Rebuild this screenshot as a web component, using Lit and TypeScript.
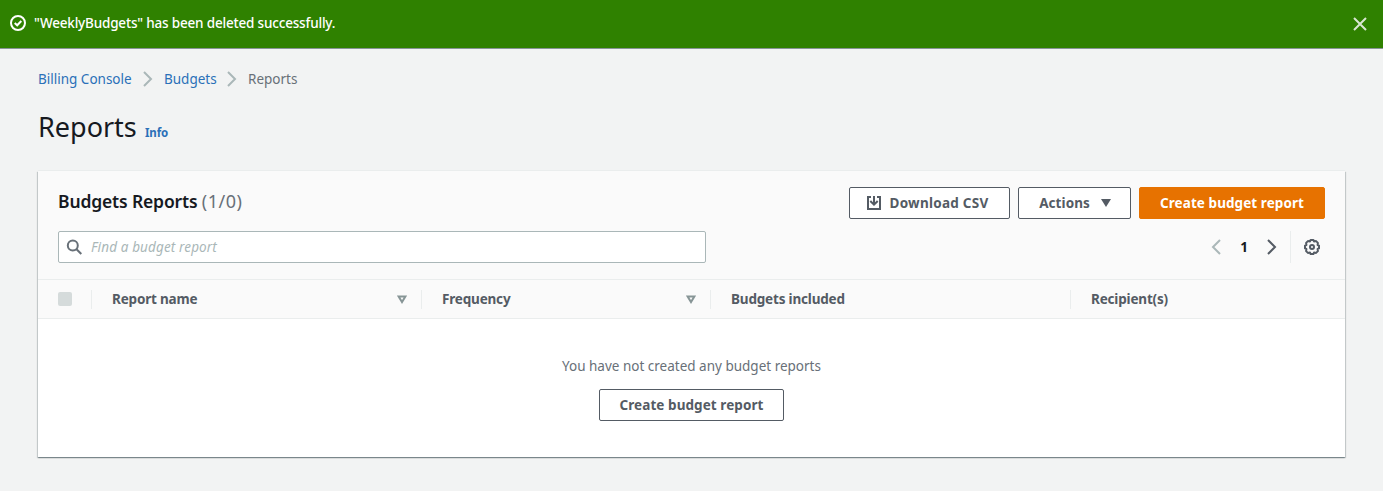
import { LitElement, html, css, svg } from "lit";
import { customElement } from "lit/decorators.js";

const chevronRight = svg`<path d="M4 1 L11 8 L4 15" />`;
const chevronLeft = svg`<path d="M12 1 L5 8 L12 15" />`;

@customElement("app-root")
class AppRoot extends LitElement {
  static styles = css`
    :host {
      display: block;
      height: 491px;
      overflow: hidden;
      background: #f2f3f3;
      color: #16191f;
      font-family: "Noto Sans", "Open Sans", sans-serif;
      font-size: 13.5px;
      line-height: 22px;
    }
    * { box-sizing: border-box; }
    svg { display: block; flex: none; fill: none; stroke: currentColor; stroke-width: 2; }
    span, h1, h2, a { white-space: nowrap; }
    .flash {
      display: flex;
      align-items: center;
      height: 49px;
      padding: 0 15px 3px 10px;
      background: #2f8100;
      border-bottom: 1px solid #879596;
      color: #fff;
    }
    .flash span { margin-left: 8px; flex: 1; font-weight: 500; letter-spacing: -0.18px; }
    .close { margin-top: 2px; color: #d9e6d2; }
    .crumbs { display: flex; align-items: center; height: 22px; margin: 19px 0 0 38px; color: #687078; }
    .crumbs a { color: #2a70b8; }
    .crumbs .c1 { width: 94px; }
    .crumbs .c2 { width: 52px; }
    .crumbs svg { color: #aab7b8; margin: 0 8px; }
    .title { display: flex; align-items: baseline; height: 40px; margin: 17px 0 0 38px; }
    h1 { width: 107px; margin: 0; font-size: 27px; font-weight: 400; line-height: 40px; }
    .info { font-size: 11.5px; font-weight: 700; letter-spacing: -0.1px; color: #2a70b8; }
    .card {
      width: 1307px;
      height: 286px;
      margin: 24px 0 0 38px;
      background: #fff;
      box-shadow: 0 -1px 0 #eaeded, 0 1px 1px 0 rgba(0, 28, 36, .3), 1px 1px 1px 0 rgba(0, 28, 36, .15), -1px 1px 1px 0 rgba(0, 28, 36, .15);
    }
    .head { height: 109px; padding: 16px 20px 0; background: #fafafa; border-bottom: 1px solid #eaeded; }
    .row { display: flex; align-items: center; justify-content: space-between; height: 32px; }
    .row + .row { margin-top: 12px; }
    h2 { margin: -5px 0 0; font-size: 17.5px; font-weight: 600; letter-spacing: -0.15px; }
    h2 span { font-size: 18px; font-weight: 400; letter-spacing: 0.5px; color: #687078; }
    .actions { display: flex; gap: 8px; }
    .btn {
      display: flex;
      align-items: center;
      justify-content: center;
      height: 32px;
      border: 1px solid #545b64;
      border-radius: 2px;
      background: #fff;
      color: #545b64;
      font-weight: 700;
      letter-spacing: 0.07px;
    }
    .download { width: 161px; gap: 8px; padding-right: 5px; letter-spacing: 0.25px; }
    .menu { width: 113px; gap: 10px; padding-left: 2px; }
    .menu svg { fill: currentColor; stroke: none; }
    .create { width: 186px; background: #e77200; border-color: #e77200; color: #fff; }
    .search {
      display: flex;
      align-items: center;
      width: 648px;
      height: 32px;
      padding-left: 7px;
      gap: 9px;
      border: 1px solid #aab7b8;
      border-radius: 2px;
      background: #fff;
      color: #aab7b8;
      font-style: italic;
      letter-spacing: 0.13px;
    }
    .search svg { color: #687078; }
    .pager { display: flex; align-items: center; color: #545b64; }
    .pager .prev { color: #aab7b8; }
    .num { width: 40px; text-align: center; font-weight: 700; color: #16191f; }
    .gear { display: flex; align-items: center; height: 32px; margin-left: 10px; padding: 0 5px 0 13px; border-left: 1px solid #eaeded; }
    .cols { display: grid; grid-template-columns: 54px 330px 289px 360px 274px; align-items: center; height: 39px; background: #fafafa; border-bottom: 1px solid #eaeded; }
    .col { display: flex; align-items: center; justify-content: space-between; height: 19px; padding: 0 14px 0 20px; border-right: 1px solid #eaeded; font-weight: 700; letter-spacing: -0.18px; color: #545b64; }
    .col:last-child { border: 0; }
    .col svg { color: #879596; stroke-width: 2; }
    .check { width: 14px; height: 14px; border-radius: 2px; background: #d5dbdb; }
    .empty { display: flex; flex-direction: column; align-items: center; padding-top: 36px; gap: 12px; color: #687078; }
    .empty .btn { width: 185px; }
  `;

  render() {
    return html`
      <div class="flash">
        <svg width="16" height="16" viewBox="0 0 16 16"><circle cx="8" cy="8" r="7" /><path d="M4.7 8 L7.2 10.3 L11.3 6" /></svg>
        <span>"WeeklyBudgets" has been deleted successfully.</span>
        <svg class="close" width="16" height="16" viewBox="0 0 16 16"><path d="M2 2 L14 14 M14 2 L2 14" /></svg>
      </div>
      <nav class="crumbs">
        <a class="c1">Billing Console</a>
        <svg width="16" height="16" viewBox="0 0 16 16">${chevronRight}</svg>
        <a class="c2">Budgets</a>
        <svg width="16" height="16" viewBox="0 0 16 16">${chevronRight}</svg>
        <span>Reports</span>
      </nav>
      <div class="title"><h1>Reports</h1><a class="info">Info</a></div>
      <section class="card">
        <div class="head">
          <div class="row">
            <h2>Budgets Reports <span>(1/0)</span></h2>
            <div class="actions">
              <div class="btn download">
                <svg width="16" height="16" viewBox="0 0 16 16"><path d="M5 2 H2 V14 H14 V2 H11 M8 1 V10 M4.3 6 L8 9.7 L11.7 6" /></svg>
                <span>Download CSV</span>
              </div>
              <div class="btn menu"><span>Actions</span>
                <svg width="12" height="10" viewBox="0 0 12 10"><path d="M1 1 H11 L6 9 Z" /></svg>
              </div>
              <div class="btn create"><span>Create budget report</span></div>
            </div>
          </div>
          <div class="row">
            <div class="search">
              <svg width="16" height="16" viewBox="0 0 16 16"><circle cx="6.8" cy="6.5" r="5" /><path d="M10.3 10 L15.3 15" /></svg>
              <span>Find a budget report</span>
            </div>
            <div class="pager">
              <svg class="prev" width="16" height="16" viewBox="0 0 16 16">${chevronLeft}</svg>
              <span class="num">1</span>
              <svg width="16" height="16" viewBox="0 0 16 16">${chevronRight}</svg>
              <div class="gear">
                <svg width="16" height="16" viewBox="0 0 16 16"><path stroke-linejoin="round" d="M6.6 1 H9.4 L10 2.4 L12.1 2.1 L13.9 3.9 L13.6 6 L15 6.6 V9.4 L13.6 10 L13.9 12.1 L12.1 13.9 L10 13.6 L9.4 15 H6.6 L6 13.6 L3.9 13.9 L2.1 12.1 L2.4 10 L1 9.4 V6.6 L2.4 6 L2.1 3.9 L3.9 2.1 L6 2.4 Z" /><circle cx="8" cy="8" r="2" /></svg>
              </div>
            </div>
          </div>
        </div>
        <div class="cols">
          <div class="col"><div class="check"></div></div>
          <div class="col"><span>Report name</span>${this.sortIcon()}</div>
          <div class="col"><span>Frequency</span>${this.sortIcon()}</div>
          <div class="col"><span>Budgets included</span></div>
          <div class="col"><span>Recipient(s)</span></div>
        </div>
        <div class="empty">
          <span>You have not created any budget reports</span>
          <div class="btn"><span>Create budget report</span></div>
        </div>
      </section>
    `;
  }

  private sortIcon() {
    return html`<svg width="10" height="9" viewBox="0 0 10 9"><path d="M1.6 1.5 H8.4 L5 7 Z" /></svg>`;
  }
}
